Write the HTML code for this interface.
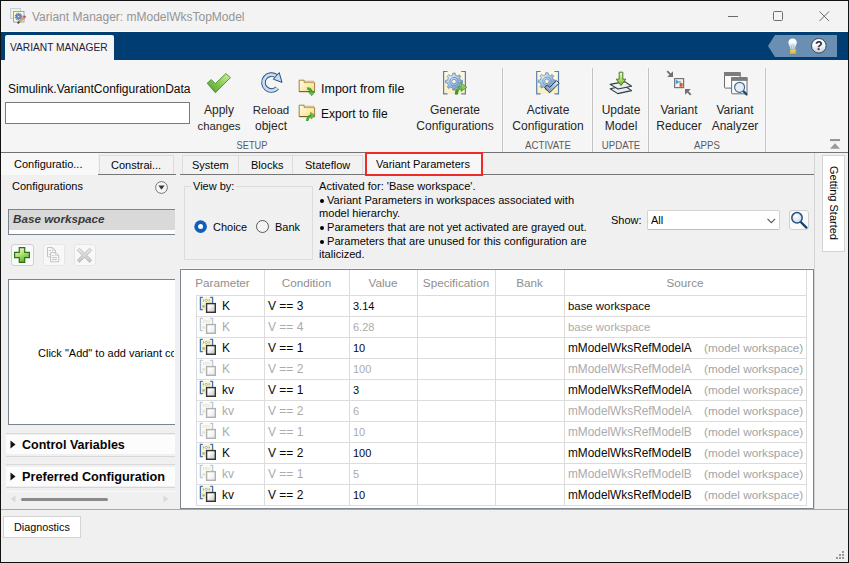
<!DOCTYPE html>
<html><head><meta charset="utf-8">
<style>
*{margin:0;padding:0;box-sizing:border-box}
html,body{width:849px;height:563px;overflow:hidden;background:#f0f0f0}
body{font-family:"Liberation Sans",sans-serif;font-size:12px;line-height:14px;color:#000;position:relative}
.a{position:absolute;white-space:nowrap}
.lb{position:absolute;white-space:nowrap;text-align:center;color:#262626;font-size:12px;line-height:16px}
.sec{position:absolute;white-space:nowrap;text-align:center;color:#5a5a5a;font-size:10.5px;line-height:12px;transform:scaleX(0.92)}
.dv{position:absolute;width:1px;background:#c2c2c2;box-shadow:-1px 0 0 #f9f9f9,1px 0 0 #f9f9f9}
.hd{color:#8f8f8f;font-size:11.7px}
.td{font-size:11.5px;line-height:14px}
.t11{font-size:11px;line-height:13px}
svg{overflow:visible}
</style></head><body>
<svg width="0" height="0" style="position:absolute"><defs>
<linearGradient id="pg" x1="0" y1="0" x2="1" y2="1"><stop offset="0.3" stop-color="#ffffff"/><stop offset="1" stop-color="#bdbdbd"/></linearGradient>
<linearGradient id="py" x1="0" y1="0" x2="0.3" y2="1"><stop offset="0" stop-color="#fbf6dc"/><stop offset="1" stop-color="#fbf0b0"/></linearGradient>
<linearGradient id="chk" x1="0" y1="0" x2="0" y2="1"><stop offset="0" stop-color="#a6dc6a"/><stop offset="1" stop-color="#4c9a2a"/></linearGradient>
<linearGradient id="fold" x1="0" y1="0" x2="0" y2="1"><stop offset="0" stop-color="#fdf3b8"/><stop offset="1" stop-color="#e8cf78"/></linearGradient>
<radialGradient id="gear" cx="0.4" cy="0.35" r="0.7"><stop offset="0" stop-color="#b9d2ee"/><stop offset="1" stop-color="#5b86bb"/></radialGradient>
</defs></svg>

<!-- title bar -->
<div class="a" style="left:0;top:0;width:849px;height:31px;background:#f3f3f3"></div>
<div class="a" style="left:0;top:31px;width:849px;height:1px;background:#fbfbfb"></div>
<svg class="a" style="left:9px;top:7px" width="18" height="18" viewBox="0 0 18 18">
<rect x="1.5" y="1.5" width="10" height="10" fill="#fbf3c8" stroke="#bcd0e6" stroke-width="1"/>
<rect x="4.5" y="4.5" width="10.5" height="10.5" fill="#fdf8dc" stroke="#8aa8cc" stroke-width="1"/>
<circle cx="9.6" cy="9.6" r="3.3" fill="none" stroke="#5a80b8" stroke-width="1.2" stroke-dasharray="1.2 0.9"/>
<circle cx="9.6" cy="9.6" r="2.8" fill="#4f78b2"/>
<circle cx="9.6" cy="9.6" r="1.6" fill="none" stroke="#8fb0d8" stroke-width="0.7"/>
<circle cx="9.6" cy="9.6" r="0.7" fill="#fff"/>
<path d="M9.8 15.4L15.4 10" stroke="#d8a048" stroke-width="2.3"/>
<path d="M14.8 10.6L16.4 9" stroke="#d04a78" stroke-width="2.3"/>
<path d="M8.6 16.4L10.2 14.8" stroke="#3a3a3a" stroke-width="1.6"/>
</svg>
<div class="a" style="left:32px;top:10px;color:#949494;font-size:12px">Variant Manager: mModelWksTopModel</div>
<div class="a" style="left:728px;top:16px;width:10px;height:1px;background:#6a6a6a"></div>
<div class="a" style="left:773px;top:11px;width:10px;height:10px;border:1px solid #6e6e6e;border-radius:1.5px"></div>
<svg class="a" style="left:819px;top:11px" width="11" height="11" viewBox="0 0 11 11"><path d="M0.5 0.5L10 10M10 0.5L0.5 10" stroke="#6a6a6a" stroke-width="1"/></svg>

<!-- blue band -->
<div class="a" style="left:0;top:32px;width:849px;height:28px;background:#003d73"></div>
<div class="a" style="left:5px;top:35px;width:109px;height:25px;background:#f5f5f5;border-radius:2px 2px 0 0"></div>
<div class="a" style="left:10px;top:40px;font-size:10.2px;line-height:14px;color:#202040;padding-top:1px">VARIANT MANAGER</div>
<svg class="a" style="left:768px;top:35px" width="69" height="22" viewBox="0 0 69 22"><path d="M0 11L7 0H69V22H7Z" fill="#6b8fb2"/></svg>
<svg class="a" style="left:788px;top:38px" width="10" height="17" viewBox="0 0 10 17">
<defs><linearGradient id="bg1" x1="0" y1="0" x2="0" y2="1"><stop offset="0.3" stop-color="#ffffff"/><stop offset="1" stop-color="#b8d0ea"/></linearGradient></defs>
<path d="M4.6 0.4C1.9 0.4 0.4 2.4 0.4 4.6C0.4 6.9 2 8.2 2.2 11H7C7.2 8.2 8.8 6.9 8.8 4.6C8.8 2.4 7.3 0.4 4.6 0.4Z" fill="url(#bg1)"/>
<path d="M3.4 10.8V7.4L4.6 6.6L5.8 7.4V10.8" fill="none" stroke="#9aa8b8" stroke-width="0.6"/>
<rect x="2" y="11" width="6.2" height="4.8" fill="#d2ae2c"/>
<path d="M2.6 12.6L7.4 12M2.6 14.4L7.4 13.8" stroke="#f4e27a" stroke-width="0.9"/>
</svg>
<svg class="a" style="left:811px;top:38px" width="16" height="16" viewBox="0 0 16 16">
<defs><linearGradient id="hg" x1="0" y1="0" x2="0" y2="1"><stop offset="0.4" stop-color="#ffffff"/><stop offset="1" stop-color="#c4cad2"/></linearGradient></defs>
<circle cx="7.8" cy="7.8" r="7.3" fill="url(#hg)" stroke="#2c3c54" stroke-width="0.9"/>
<text x="7.9" y="12.4" text-anchor="middle" font-family="Liberation Sans" font-weight="bold" font-size="12.5" fill="#1e2b42">?</text>
</svg>

<!-- toolstrip body -->
<div class="a" style="left:0;top:60px;width:849px;height:92px;background:#f5f5f5"></div>
<div class="a" style="left:0;top:152px;width:849px;height:1px;background:#727272"></div>

<div class="a" style="left:8px;top:82px;color:#0a0a0a">Simulink.VariantConfigurationData</div>
<div class="a" style="left:5px;top:102px;width:185px;height:22px;background:#fff;border:1px solid #7a7a7a"></div>

<!-- Apply changes -->
<svg class="a" style="left:206px;top:72px" width="26" height="22" viewBox="0 0 26 22">
<defs><linearGradient id="chk2" x1="1" y1="0" x2="0" y2="1"><stop offset="0" stop-color="#d6f29a"/><stop offset="0.6" stop-color="#7cc04a"/><stop offset="1" stop-color="#4a9a2c"/></linearGradient></defs>
<path d="M1.2 11.2L5.3 7.6L9.4 11.7L19.8 1.6L24.4 5.6L9.4 20.8Z" fill="url(#chk2)" stroke="#3f8a2a" stroke-width="0.9" stroke-linejoin="round"/>
</svg>
<div class="lb" style="left:189px;top:102px;width:60px">Apply</div>
<div class="lb" style="left:189px;top:118px;width:60px;font-size:11.4px">changes</div>
<!-- Reload -->
<svg class="a" style="left:260px;top:72px" width="23" height="22" viewBox="0 0 23 22">
<path d="M17.3 16A8 8 0 1 1 16.2 4.1" fill="none" stroke="#2a4d7a" stroke-width="4.6"/>
<path d="M17.3 16A8 8 0 1 1 16.2 4.1" fill="none" stroke="#c6ddf2" stroke-width="2.8"/>
<path d="M19.2 0.6L22 10.4L13.4 7.2Z" fill="#c6ddf2" stroke="#2a4d7a" stroke-width="1" stroke-linejoin="round"/>
</svg>
<div class="lb" style="left:241px;top:102px;width:60px;font-size:11.5px">Reload</div>
<div class="lb" style="left:241px;top:118px;width:60px">object</div>
<!-- import/export -->
<svg class="a" style="left:298px;top:79px" width="18" height="18" viewBox="0 0 18 18">
<defs><linearGradient id="fold2" x1="0" y1="0" x2="1" y2="1"><stop offset="0" stop-color="#fffdf2"/><stop offset="0.5" stop-color="#fbefb4"/><stop offset="1" stop-color="#f2da78"/></linearGradient>
<linearGradient id="gar" x1="0" y1="0" x2="1" y2="1"><stop offset="0" stop-color="#3a9a2a"/><stop offset="1" stop-color="#a6e070"/></linearGradient></defs>
<path d="M1.2 1.2H6.2V3.6H16.6V12.6H1.2Z" fill="url(#fold2)" stroke="#a97e3c" stroke-width="1" stroke-linejoin="round"/>
<rect x="6.7" y="1.7" width="9.4" height="1.9" fill="#dcbd82"/>
<path d="M1.2 12.6H16.6" stroke="#7a5a26" stroke-width="1"/>
<path d="M9.2 9.4Q12.6 9.6 13.6 13.2" fill="none" stroke="#47a436" stroke-width="2.6"/>
<path d="M10.6 13L16.8 13L13.7 16.8Z" fill="#6cc04a" stroke="#3a8a2a" stroke-width="0.6"/>
</svg>
<div class="a" style="left:321px;top:82px;color:#0a0a0a;font-size:12.5px">Import from file</div>
<svg class="a" style="left:298px;top:104px" width="18" height="18" viewBox="0 0 18 18">
<path d="M1.2 1.2H6.2V3.6H16.6V12.6H1.2Z" fill="url(#fold2)" stroke="#a97e3c" stroke-width="1" stroke-linejoin="round"/>
<rect x="6.7" y="1.7" width="9.4" height="1.9" fill="#dcbd82"/>
<path d="M1.2 12.6H16.6" stroke="#7a5a26" stroke-width="1"/>
<path d="M9.2 17Q9.6 12.6 13.4 11.6" fill="none" stroke="#47a436" stroke-width="2.6"/>
<path d="M12.6 8.4L16.9 11.4L13.2 15Z" fill="#6cc04a" stroke="#3a8a2a" stroke-width="0.6"/>
</svg>
<div class="a" style="left:321px;top:107px;color:#0a0a0a">Export to file</div>
<div class="sec" style="left:222px;top:139px;width:60px;transform:scaleX(0.88)">SETUP</div>
<div class="dv" style="left:502px;top:68px;height:84px"></div>

<!-- Generate -->
<svg class="a" style="left:442px;top:71px" width="25" height="24" viewBox="0 0 25 24">
<defs><linearGradient id="yb" x1="0" y1="0" x2="0" y2="1"><stop offset="0" stop-color="#fdf9e4"/><stop offset="1" stop-color="#f9efbe"/></linearGradient>
<radialGradient id="gr2" cx="0.3" cy="0.25" r="0.85"><stop offset="0" stop-color="#e4eef8"/><stop offset="0.5" stop-color="#a9c6e6"/><stop offset="1" stop-color="#5f8cc0"/></radialGradient>
<linearGradient id="ga" x1="0" y1="1" x2="1" y2="0"><stop offset="0" stop-color="#2f8a1e"/><stop offset="1" stop-color="#b6ea7a"/></linearGradient></defs>
<rect x="1.2" y="0.4" width="22.4" height="22.6" fill="url(#yb)"/>
<path d="M5.6 0.5H1.6V22.9H5.6M19.2 0.5H23.4V22.9H19.2" fill="none" stroke="#5a80b0" stroke-width="1.2"/>
<path d="M18.57 9.29 L20.51 9.34 L20.51 11.86 L18.57 11.91 L17.57 14.32 L18.91 15.72 L17.12 17.51 L15.72 16.17 L13.31 17.17 L13.26 19.11 L10.74 19.11 L10.69 17.17 L8.28 16.17 L6.88 17.51 L5.09 15.72 L6.43 14.32 L5.43 11.91 L3.49 11.86 L3.49 9.34 L5.43 9.29 L6.43 6.88 L5.09 5.48 L6.88 3.69 L8.28 5.03 L10.69 4.03 L10.74 2.09 L13.26 2.09 L13.31 4.03 L15.72 5.03 L17.12 3.69 L18.91 5.48 L17.57 6.88Z" fill="url(#gr2)" stroke="#6a8cb8" stroke-width="0.8"/>
<circle cx="12" cy="10.6" r="4.2" fill="none" stroke="#6d94c4" stroke-width="1"/>
<circle cx="12" cy="10.6" r="2.3" fill="#fbf4cf" stroke="#5d86ba" stroke-width="0.8"/>
<path d="M13.2 23.2C13.4 18.5 15.5 15.6 19 15.2V11.8L24.8 16.2L19 20.4V17.8C16.8 18.2 15.8 20.4 15.6 23.2Z" fill="url(#ga)" stroke="#2e7a1e" stroke-width="0.6"/>
</svg>
<div class="lb" style="left:415px;top:102px;width:80px">Generate</div>
<div class="lb" style="left:410px;top:118px;width:90px">Configurations</div>

<!-- Activate -->
<svg class="a" style="left:536px;top:71px" width="24" height="24" viewBox="0 0 24 24">
<defs><linearGradient id="ck3" x1="0" y1="1" x2="1" y2="0"><stop offset="0" stop-color="#6a88a8"/><stop offset="1" stop-color="#e6f2fc"/></linearGradient></defs>
<rect x="0.6" y="0.4" width="22" height="22.6" fill="url(#yb)"/>
<path d="M4.6 0.5H0.7V22.9H4.6M18.4 0.5H22.5V22.9H18.4" fill="none" stroke="#5a80b0" stroke-width="1.2"/>
<path d="M17.47 8.99 L19.41 9.04 L19.41 11.56 L17.47 11.61 L16.47 14.02 L17.81 15.42 L16.02 17.21 L14.62 15.87 L12.21 16.87 L12.16 18.81 L9.64 18.81 L9.59 16.87 L7.18 15.87 L5.78 17.21 L3.99 15.42 L5.33 14.02 L4.33 11.61 L2.39 11.56 L2.39 9.04 L4.33 8.99 L5.33 6.58 L3.99 5.18 L5.78 3.39 L7.18 4.73 L9.59 3.73 L9.64 1.79 L12.16 1.79 L12.21 3.73 L14.62 4.73 L16.02 3.39 L17.81 5.18 L16.47 6.58Z" fill="url(#gr2)" stroke="#6a8cb8" stroke-width="0.8"/>
<circle cx="10.9" cy="10.3" r="4.2" fill="none" stroke="#6d94c4" stroke-width="1"/>
<circle cx="10.9" cy="10.3" r="2.3" fill="#fbf4cf" stroke="#5d86ba" stroke-width="0.8"/>
<path d="M8.6 16.6L11.4 14L13.6 16.4L20.6 9.6L23.2 12.2L13.6 21.8Z" fill="url(#ck3)" stroke="#1e2e44" stroke-width="0.9" stroke-linejoin="round"/>
</svg>
<div class="lb" style="left:508px;top:102px;width:80px">Activate</div>
<div class="lb" style="left:508px;top:118px;width:80px">Configuration</div>
<div class="sec" style="left:508px;top:139px;width:80px">ACTIVATE</div>
<div class="dv" style="left:592px;top:68px;height:84px"></div>

<!-- Update -->
<svg class="a" style="left:609px;top:71px" width="24" height="24" viewBox="0 0 24 24">
<defs><linearGradient id="sh" x1="0" y1="0" x2="1" y2="1"><stop offset="0" stop-color="#ffffff"/><stop offset="1" stop-color="#d4dde4"/></linearGradient>
<linearGradient id="ua" x1="0" y1="0" x2="0" y2="1"><stop offset="0" stop-color="#f4fbe8"/><stop offset="0.6" stop-color="#a8d860"/><stop offset="1" stop-color="#6aaa2a"/></linearGradient></defs>
<path d="M1.2 17.8L8.8 22.6L22.6 19.6L15.4 14.8Z" fill="url(#sh)" stroke="#2e3c40" stroke-width="1.1" stroke-linejoin="round"/>
<path d="M1.2 13.4L9 18L22.6 15.2L15.8 10.6Z" fill="url(#sh)" stroke="#2e3c40" stroke-width="1.1" stroke-linejoin="round"/>
<path d="M10.2 1.2H13.8V8.2H16.8L12 14.4L7.2 8.2H10.2Z" fill="url(#ua)" stroke="#4a7a14" stroke-width="1" stroke-linejoin="round"/>
</svg>
<div class="lb" style="left:591px;top:102px;width:60px">Update</div>
<div class="lb" style="left:591px;top:118px;width:60px">Model</div>
<div class="sec" style="left:591px;top:139px;width:60px">UPDATE</div>
<div class="dv" style="left:648px;top:68px;height:84px"></div>

<!-- Reducer -->
<svg class="a" style="left:666px;top:70px" width="26" height="26" viewBox="0 0 26 26">
<path d="M1.2 1.2L5.6 5.6" stroke="#707070" stroke-width="1.8"/>
<path d="M7 1.2V7H1.2Z" fill="#707070"/>
<path d="M20.4 20.4L24.8 24.8" stroke="#707070" stroke-width="1.8"/>
<path d="M19 19H24.8L19 24.8Z" fill="#707070"/>
<rect x="8.6" y="8.6" width="9" height="9" fill="#f2f2f2" stroke="#767676" stroke-width="1.2"/>
<path d="M9.8 9.6V14.2L13.4 11.9Z" fill="#3a98dc"/>
<path d="M13 11.9H15" stroke="#555" stroke-width="0.8"/>
<rect x="13.6" y="13" width="3" height="3.8" rx="0.6" fill="#e0561e"/>
</svg>
<div class="lb" style="left:649px;top:102px;width:60px">Variant</div>
<div class="lb" style="left:649px;top:118px;width:60px">Reducer</div>
<!-- Analyzer -->
<svg class="a" style="left:723px;top:71px" width="26" height="26" viewBox="0 0 26 26">
<rect x="1.5" y="1.5" width="15.6" height="15.6" rx="0.8" fill="#fcfcfc" stroke="#6c6c6c" stroke-width="1"/>
<rect x="1" y="1" width="16.6" height="4" fill="#7c7c7c"/>
<rect x="8.6" y="6.6" width="15.4" height="16.2" rx="0.8" fill="#fcfcfc" stroke="#6c6c6c" stroke-width="1"/>
<rect x="8.1" y="6.1" width="16.4" height="3.8" fill="#7c7c7c"/>
<path d="M20 19.8L23.6 23.4" stroke="#1e4670" stroke-width="2.2" stroke-linecap="round"/>
<circle cx="16.6" cy="16.3" r="5" fill="#e6edf4" stroke="#3f6e9e" stroke-width="1.2"/>
</svg>
<div class="lb" style="left:705px;top:102px;width:60px">Variant</div>
<div class="lb" style="left:705px;top:118px;width:60px">Analyzer</div>
<div class="sec" style="left:677px;top:139px;width:60px">APPS</div>
<div class="dv" style="left:765px;top:68px;height:84px"></div>
<svg class="a" style="left:830px;top:139px" width="10" height="10" viewBox="0 0 10 10">
<rect x="0" y="0" width="10" height="2.1" fill="#959595"/>
<path d="M0 9.8L5 4.2L10 9.8Z" fill="#9a9a9a"/>
</svg>

<!-- LEFT PANEL -->
<div class="a" style="left:1px;top:153px;width:97px;height:22px;background:#f8f8f8"></div>
<div class="a t11" style="left:14px;top:158px;color:#050505">Configuratio...</div>
<div class="a" style="left:99px;top:155px;width:75px;height:19px;background:#f2f2f2;border:1px solid #dcdcdc;border-bottom:none"></div>
<div class="a t11" style="left:111px;top:159px;color:#050505">Constrai...</div>
<div class="a t11" style="left:12px;top:180px;color:#050505">Configurations</div>
<svg class="a" style="left:155px;top:181px" width="13" height="13" viewBox="0 0 13 13">
<circle cx="6.5" cy="6.5" r="5.9" fill="#f6f6f6" stroke="#767676" stroke-width="1"/>
<path d="M3.4 4.6L9.6 4.6L6.5 8.8Z" fill="#3a3a3a"/>
</svg>
<div class="a" style="left:8px;top:209px;width:167px;height:26px;background:#fff;border:1px solid #7a8491;border-right:none"></div>
<div class="a" style="left:9px;top:210px;width:166px;height:20px;background:#d9d9d9"></div>
<div class="a" style="left:13px;top:212px;font-weight:bold;font-style:italic;color:#3a3a3a;font-size:11.7px;line-height:14px">Base workspace</div>
<!-- buttons -->
<div class="a" style="left:11px;top:244px;width:23px;height:22px;background:#fafafa;border:1px solid #cfcfcf;border-radius:3px"></div>
<svg class="a" style="left:14px;top:247px" width="16" height="16" viewBox="0 0 16 16">
<defs><linearGradient id="plg" x1="0" y1="0" x2="0.5" y2="1"><stop offset="0" stop-color="#f2fbdc"/><stop offset="0.5" stop-color="#bde47a"/><stop offset="1" stop-color="#62b034"/></linearGradient></defs>
<path d="M5.3 0.6H10.7V5.3H15.4V10.7H10.7V15.4H5.3V10.7H0.6V5.3H5.3Z" fill="url(#plg)" stroke="#2a7418" stroke-width="1.2"/>
</svg>
<div class="a" style="left:43px;top:244px;width:22px;height:22px;background:#f8f8f8;border:1px solid #e6e6e6;border-radius:3px"></div>
<svg class="a" style="left:46px;top:246px" width="14" height="17" viewBox="0 0 14 17">
<path d="M1.5 1.5H6.4L9.5 4.4V10.9H1.5Z" fill="#f9f9f9" stroke="#c2c2c2" stroke-width="1" stroke-linejoin="round"/>
<path d="M6.2 1.6V4.6H9.4" fill="none" stroke="#c8c8c8" stroke-width="0.8"/>
<path d="M2.8 4.5H5M2.8 8.3H4" stroke="#c6c6c6" stroke-width="1"/>
<path d="M4.6 6.6H9.6L12.8 9.3V15.8H4.6Z" fill="#f9f9f9" stroke="#c2c2c2" stroke-width="1" stroke-linejoin="round"/>
<path d="M9.4 6.7V9.5H12.6" fill="none" stroke="#c8c8c8" stroke-width="0.8"/>
<path d="M6 9.6H7.8M6 11.6H11M6 13.5H11" stroke="#c6c6c6" stroke-width="1"/>
</svg>
<div class="a" style="left:74px;top:244px;width:22px;height:22px;background:#f8f8f8;border:1px solid #e6e6e6;border-radius:3px"></div>
<svg class="a" style="left:76px;top:247px" width="17" height="16" viewBox="0 0 17 16">
<defs><linearGradient id="xg" x1="0" y1="0" x2="0" y2="1"><stop offset="0" stop-color="#e8e8e8"/><stop offset="1" stop-color="#c4c4c4"/></linearGradient></defs>
<path d="M1.2 3.4L3.4 1.2L8.5 6.1L13.6 1.2L15.8 3.4L10.8 8.3L15.8 13.2L13.6 15.4L8.5 10.5L3.4 15.4L1.2 13.2L6.2 8.3Z" fill="url(#xg)" stroke="#b8b8b8" stroke-width="0.8" stroke-linejoin="round"/>
</svg>
<div class="a" style="left:8px;top:279px;width:167px;height:146px;background:#fff;border:1px solid #7a8491;border-right:none"></div>
<div class="a t11" style="left:38px;top:347px;color:#050505;width:136px;overflow:hidden">Click "Add" to add variant co</div>
<div class="a" style="left:6px;top:433px;width:169px;height:24px;background:#f0f0f0;border-top:1px solid #d8d8d8;border-bottom:1px solid #d8d8d8"></div>
<div class="a" style="left:6px;top:435px;width:169px;height:19px;background:#fcfcfc"></div>
<svg class="a" style="left:10px;top:440px" width="6" height="9" viewBox="0 0 6 9"><path d="M0.5 0.5L5.5 4.5L0.5 8.5Z" fill="#111"/></svg>
<div class="a" style="left:22px;top:438px;font-weight:bold;color:#050505;font-size:12.5px;line-height:14px">Control Variables</div>
<div class="a" style="left:6px;top:464px;width:169px;height:24px;background:#f0f0f0;border-top:1px solid #d8d8d8;border-bottom:1px solid #d8d8d8"></div>
<div class="a" style="left:6px;top:467px;width:169px;height:19px;background:#fcfcfc"></div>
<div class="a" style="left:6px;top:491px;width:169px;height:1px;background:#fafafa"></div>
<svg class="a" style="left:10px;top:472px" width="6" height="9" viewBox="0 0 6 9"><path d="M0.5 0.5L5.5 4.5L0.5 8.5Z" fill="#111"/></svg>
<div class="a" style="left:22px;top:470px;font-weight:bold;color:#050505;font-size:12.7px;line-height:14px">Preferred Configuration</div>
<svg class="a" style="left:10px;top:495px" width="6" height="8" viewBox="0 0 6 8"><path d="M5.5 0.5L0.5 4L5.5 7.5Z" fill="#dadada"/></svg>
<div class="a" style="left:21px;top:498px;width:87px;height:3px;background:#8a8a8a;border-radius:1.5px"></div>
<svg class="a" style="left:163px;top:495px" width="6" height="8" viewBox="0 0 6 8"><path d="M0.5 0.5L5.5 4L0.5 7.5Z" fill="#dadada"/></svg>


<!-- RIGHT MAIN -->
<div class="a" style="left:182px;top:155px;width:57px;height:19px;background:#f2f2f2;border:1px solid #dcdcdc;border-bottom:none"></div>
<div class="a t11" style="left:192px;top:159px;color:#050505">System</div>
<div class="a" style="left:238px;top:155px;width:55px;height:19px;background:#f2f2f2;border:1px solid #dcdcdc;border-bottom:none"></div>
<div class="a t11" style="left:251px;top:159px;color:#050505">Blocks</div>
<div class="a" style="left:292px;top:155px;width:71px;height:19px;background:#f2f2f2;border:1px solid #dcdcdc;border-bottom:none"></div>
<div class="a t11" style="left:305px;top:159px;color:#050505">Stateflow</div>
<div class="a" style="left:365px;top:152px;width:118px;height:24px;background:#f7f7f7;border:2px solid #ee2b2b"></div>
<div class="a t11" style="left:376px;top:158px;color:#050505">Variant Parameters</div>
<div class="a" style="left:180px;top:174px;width:185px;height:1px;background:#767676"></div>
<div class="a" style="left:483px;top:174px;width:332px;height:1px;background:#767676"></div>
<div class="a" style="left:98px;top:174px;width:78px;height:1px;background:#767676"></div>

<div class="a" style="left:184px;top:186px;width:129px;height:74px;border:1px solid #dcdcdc"></div>
<div class="a t11" style="left:191px;top:180px;padding:0 2px;background:#f0f0f0;color:#050505">View by:</div>
<svg class="a" style="left:194px;top:220px" width="14" height="14" viewBox="0 0 14 14"><circle cx="6.6" cy="6.6" r="6.3" fill="#0f5fb8"/><circle cx="6.6" cy="6.6" r="2.5" fill="#fff"/></svg>
<div class="a t11" style="left:213px;top:221px;color:#050505">Choice</div>
<svg class="a" style="left:256px;top:220px" width="14" height="14" viewBox="0 0 14 14"><circle cx="6.5" cy="6.5" r="6" fill="#f4f4f4" stroke="#5a5a5a" stroke-width="1"/></svg>
<div class="a t11" style="left:275px;top:221px;color:#050505">Bank</div>

<div class="a t11" style="left:319px;top:180px;color:#050505;font-size:11.1px">Activated for: 'Base workspace'.</div>
<div class="a" style="left:319.5px;top:199px;width:4px;height:4px;border-radius:50%;background:#000"></div>
<div class="a t11" style="left:327px;top:194px;color:#050505;font-size:11.1px">Variant Parameters in workspaces associated with</div>
<div class="a t11" style="left:319px;top:207px;color:#050505;font-size:11.1px">model hierarchy.</div>
<div class="a" style="left:319.5px;top:226px;width:4px;height:4px;border-radius:50%;background:#000"></div>
<div class="a t11" style="left:327px;top:221px;color:#050505;font-size:11.1px">Parameters that are not yet activated are grayed out.</div>
<div class="a" style="left:319.5px;top:240px;width:4px;height:4px;border-radius:50%;background:#000"></div>
<div class="a t11" style="left:327px;top:235px;color:#050505;font-size:11.1px">Parameters that are unused for this configuration are</div>
<div class="a t11" style="left:319px;top:248px;color:#050505;font-size:11.1px">italicized.</div>

<div class="a t11" style="left:611px;top:214px;color:#050505">Show:</div>
<div class="a" style="left:647px;top:210px;width:133px;height:20px;background:#fff;border:1px solid #d4d4d4;border-bottom-color:#c0c0c0;border-radius:2px"></div>
<div class="a t11" style="left:651px;top:214px;color:#050505">All</div>
<svg class="a" style="left:767px;top:218px" width="9" height="6" viewBox="0 0 9 6"><path d="M0.5 0.8L4.3 4.6L8.1 0.8" fill="none" stroke="#555" stroke-width="1.1"/></svg>
<div class="a" style="left:789px;top:210px;width:20px;height:20px;background:#fbfbfb;border:1px solid #d0d0d0;border-radius:3px"></div>
<svg class="a" style="left:789px;top:210px" width="20" height="20" viewBox="0 0 20 20">
<defs><radialGradient id="lg" cx="0.4" cy="0.35" r="0.7"><stop offset="0" stop-color="#ffffff"/><stop offset="1" stop-color="#c8d8e8"/></radialGradient></defs>
<path d="M12 12.2L17.4 17.6" stroke="#1a3f66" stroke-width="2.3" stroke-linecap="round"/>
<circle cx="8" cy="7.8" r="5.2" fill="url(#lg)" stroke="#24507e" stroke-width="1.5"/>
</svg>

<div class="a" style="left:180px;top:268px;width:634px;height:1px;background:#f7f7f7"></div>
<!-- table frame -->
<div class="a" style="left:180px;top:269px;width:634px;height:240px;background:#fff;border:1px solid #7e858f"></div>
<div class="a" style="left:264px;top:270px;width:1px;height:25px;background:#dcdcdc"></div>
<div class="a" style="left:349px;top:270px;width:1px;height:25px;background:#dcdcdc"></div>
<div class="a" style="left:417px;top:270px;width:1px;height:25px;background:#dcdcdc"></div>
<div class="a" style="left:495px;top:270px;width:1px;height:25px;background:#dcdcdc"></div>
<div class="a" style="left:564px;top:270px;width:1px;height:25px;background:#dcdcdc"></div>
<div class="a" style="left:806px;top:270px;width:1px;height:25px;background:#dcdcdc"></div>
<div class="a hd" style="left:181px;top:276px;width:83px;text-align:center">Parameter</div>
<div class="a hd" style="left:264px;top:276px;width:85px;text-align:center">Condition</div>
<div class="a hd" style="left:349px;top:276px;width:68px;text-align:center">Value</div>
<div class="a hd" style="left:417px;top:276px;width:78px;text-align:center">Specification</div>
<div class="a hd" style="left:495px;top:276px;width:69px;text-align:center">Bank</div>
<div class="a hd" style="left:564px;top:276px;width:242px;text-align:center">Source</div>
<div class="a" style="left:196px;top:295px;width:611px;height:1px;background:#dcdcdc"></div>
<div class="a" style="left:196px;top:316px;width:611px;height:1px;background:#dcdcdc"></div>
<div class="a" style="left:196px;top:337px;width:611px;height:1px;background:#dcdcdc"></div>
<div class="a" style="left:196px;top:358px;width:611px;height:1px;background:#dcdcdc"></div>
<div class="a" style="left:196px;top:379px;width:611px;height:1px;background:#dcdcdc"></div>
<div class="a" style="left:196px;top:400px;width:611px;height:1px;background:#dcdcdc"></div>
<div class="a" style="left:196px;top:421px;width:611px;height:1px;background:#dcdcdc"></div>
<div class="a" style="left:196px;top:442px;width:611px;height:1px;background:#dcdcdc"></div>
<div class="a" style="left:196px;top:463px;width:611px;height:1px;background:#dcdcdc"></div>
<div class="a" style="left:196px;top:484px;width:611px;height:1px;background:#dcdcdc"></div>
<div class="a" style="left:196px;top:505px;width:611px;height:1px;background:#dcdcdc"></div>
<div class="a" style="left:196px;top:295px;width:1px;height:210px;background:#dcdcdc"></div>
<div class="a" style="left:264px;top:295px;width:1px;height:210px;background:#dcdcdc"></div>
<div class="a" style="left:349px;top:295px;width:1px;height:210px;background:#dcdcdc"></div>
<div class="a" style="left:417px;top:295px;width:1px;height:210px;background:#dcdcdc"></div>
<div class="a" style="left:495px;top:295px;width:1px;height:210px;background:#dcdcdc"></div>
<div class="a" style="left:564px;top:295px;width:1px;height:210px;background:#dcdcdc"></div>
<div class="a" style="left:806px;top:295px;width:1px;height:210px;background:#dcdcdc"></div>
<svg class="a" style="left:199px;top:296px;opacity:1" width="18" height="18" viewBox="0 0 18 18">
<rect x="1.6" y="1" width="11.6" height="13" fill="url(#py)"/>
<path d="M3.8 1.4H1.4V13.6H3.8M11.2 1.4H13.6V13.6H11.2" fill="none" stroke="#4673ad" stroke-width="1.3"/>
<path d="M4.4 3.2V5.6M10.2 3.2V5.6" stroke="#8fb0d8" stroke-width="1"/>
<path d="M7.3 3L8.6 4.4L7.3 5.8L6 4.4Z" fill="none" stroke="#8fb0d8" stroke-width="1"/>
<circle cx="4.6" cy="10.4" r="1.4" fill="#a9b4b0"/>
<rect x="7.6" y="7.6" width="8.7" height="8.7" fill="url(#pg)" stroke="#333" stroke-width="1.4"/>
</svg>
<div class="a td" style="left:222px;top:299px;color:#0a0a0a;font-size:12px">K</div>
<div class="a td" style="left:268px;top:299px;color:#0a0a0a;font-size:12px">V == 3</div>
<div class="a td" style="left:353px;top:299px;color:#0a0a0a;font-size:11px">3.14</div>
<div class="a td" style="left:568px;top:299px;color:#0a0a0a;font-size:11.4px">base workspace</div>
<svg class="a" style="left:199px;top:317px;opacity:0.38" width="18" height="18" viewBox="0 0 18 18">
<rect x="1.6" y="1" width="11.6" height="13" fill="url(#py)"/>
<path d="M3.8 1.4H1.4V13.6H3.8M11.2 1.4H13.6V13.6H11.2" fill="none" stroke="#4673ad" stroke-width="1.3"/>
<path d="M4.4 3.2V5.6M10.2 3.2V5.6" stroke="#8fb0d8" stroke-width="1"/>
<path d="M7.3 3L8.6 4.4L7.3 5.8L6 4.4Z" fill="none" stroke="#8fb0d8" stroke-width="1"/>
<circle cx="4.6" cy="10.4" r="1.4" fill="#a9b4b0"/>
<rect x="7.6" y="7.6" width="8.7" height="8.7" fill="url(#pg)" stroke="#333" stroke-width="1.4"/>
</svg>
<div class="a td" style="left:222px;top:320px;color:#ababab;font-size:12px">K</div>
<div class="a td" style="left:268px;top:320px;color:#ababab;font-size:12px">V == 4</div>
<div class="a td" style="left:353px;top:320px;color:#ababab;font-size:11px">6.28</div>
<div class="a td" style="left:568px;top:320px;color:#ababab;font-size:11.4px">base workspace</div>
<svg class="a" style="left:199px;top:338px;opacity:1" width="18" height="18" viewBox="0 0 18 18">
<rect x="1.6" y="1" width="11.6" height="13" fill="url(#py)"/>
<path d="M3.8 1.4H1.4V13.6H3.8M11.2 1.4H13.6V13.6H11.2" fill="none" stroke="#4673ad" stroke-width="1.3"/>
<path d="M4.4 3.2V5.6M10.2 3.2V5.6" stroke="#8fb0d8" stroke-width="1"/>
<path d="M7.3 3L8.6 4.4L7.3 5.8L6 4.4Z" fill="none" stroke="#8fb0d8" stroke-width="1"/>
<circle cx="4.6" cy="10.4" r="1.4" fill="#a9b4b0"/>
<rect x="7.6" y="7.6" width="8.7" height="8.7" fill="url(#pg)" stroke="#333" stroke-width="1.4"/>
</svg>
<div class="a td" style="left:222px;top:341px;color:#0a0a0a;font-size:12px">K</div>
<div class="a td" style="left:268px;top:341px;color:#0a0a0a;font-size:12px">V == 1</div>
<div class="a td" style="left:353px;top:341px;color:#0a0a0a;font-size:11px">10</div>
<div class="a td" style="left:568px;top:341px;color:#0a0a0a;font-size:11.85px">mModelWksRefModelA</div>
<div class="a td" style="left:704px;top:341px;color:#a3a3a3;font-size:11.75px">(model workspace)</div>
<svg class="a" style="left:199px;top:359px;opacity:0.38" width="18" height="18" viewBox="0 0 18 18">
<rect x="1.6" y="1" width="11.6" height="13" fill="url(#py)"/>
<path d="M3.8 1.4H1.4V13.6H3.8M11.2 1.4H13.6V13.6H11.2" fill="none" stroke="#4673ad" stroke-width="1.3"/>
<path d="M4.4 3.2V5.6M10.2 3.2V5.6" stroke="#8fb0d8" stroke-width="1"/>
<path d="M7.3 3L8.6 4.4L7.3 5.8L6 4.4Z" fill="none" stroke="#8fb0d8" stroke-width="1"/>
<circle cx="4.6" cy="10.4" r="1.4" fill="#a9b4b0"/>
<rect x="7.6" y="7.6" width="8.7" height="8.7" fill="url(#pg)" stroke="#333" stroke-width="1.4"/>
</svg>
<div class="a td" style="left:222px;top:362px;color:#ababab;font-size:12px">K</div>
<div class="a td" style="left:268px;top:362px;color:#ababab;font-size:12px">V == 2</div>
<div class="a td" style="left:353px;top:362px;color:#ababab;font-size:11px">100</div>
<div class="a td" style="left:568px;top:362px;color:#ababab;font-size:11.85px">mModelWksRefModelA</div>
<div class="a td" style="left:704px;top:362px;color:#a3a3a3;font-size:11.75px">(model workspace)</div>
<svg class="a" style="left:199px;top:380px;opacity:1" width="18" height="18" viewBox="0 0 18 18">
<rect x="1.6" y="1" width="11.6" height="13" fill="url(#py)"/>
<path d="M3.8 1.4H1.4V13.6H3.8M11.2 1.4H13.6V13.6H11.2" fill="none" stroke="#4673ad" stroke-width="1.3"/>
<path d="M4.4 3.2V5.6M10.2 3.2V5.6" stroke="#8fb0d8" stroke-width="1"/>
<path d="M7.3 3L8.6 4.4L7.3 5.8L6 4.4Z" fill="none" stroke="#8fb0d8" stroke-width="1"/>
<circle cx="4.6" cy="10.4" r="1.4" fill="#a9b4b0"/>
<rect x="7.6" y="7.6" width="8.7" height="8.7" fill="url(#pg)" stroke="#333" stroke-width="1.4"/>
</svg>
<div class="a td" style="left:222px;top:383px;color:#0a0a0a;font-size:12px">kv</div>
<div class="a td" style="left:268px;top:383px;color:#0a0a0a;font-size:12px">V == 1</div>
<div class="a td" style="left:353px;top:383px;color:#0a0a0a;font-size:11px">3</div>
<div class="a td" style="left:568px;top:383px;color:#0a0a0a;font-size:11.85px">mModelWksRefModelA</div>
<div class="a td" style="left:704px;top:383px;color:#a3a3a3;font-size:11.75px">(model workspace)</div>
<svg class="a" style="left:199px;top:401px;opacity:0.38" width="18" height="18" viewBox="0 0 18 18">
<rect x="1.6" y="1" width="11.6" height="13" fill="url(#py)"/>
<path d="M3.8 1.4H1.4V13.6H3.8M11.2 1.4H13.6V13.6H11.2" fill="none" stroke="#4673ad" stroke-width="1.3"/>
<path d="M4.4 3.2V5.6M10.2 3.2V5.6" stroke="#8fb0d8" stroke-width="1"/>
<path d="M7.3 3L8.6 4.4L7.3 5.8L6 4.4Z" fill="none" stroke="#8fb0d8" stroke-width="1"/>
<circle cx="4.6" cy="10.4" r="1.4" fill="#a9b4b0"/>
<rect x="7.6" y="7.6" width="8.7" height="8.7" fill="url(#pg)" stroke="#333" stroke-width="1.4"/>
</svg>
<div class="a td" style="left:222px;top:404px;color:#ababab;font-size:12px">kv</div>
<div class="a td" style="left:268px;top:404px;color:#ababab;font-size:12px">V == 2</div>
<div class="a td" style="left:353px;top:404px;color:#ababab;font-size:11px">6</div>
<div class="a td" style="left:568px;top:404px;color:#ababab;font-size:11.85px">mModelWksRefModelA</div>
<div class="a td" style="left:704px;top:404px;color:#a3a3a3;font-size:11.75px">(model workspace)</div>
<svg class="a" style="left:199px;top:422px;opacity:0.38" width="18" height="18" viewBox="0 0 18 18">
<rect x="1.6" y="1" width="11.6" height="13" fill="url(#py)"/>
<path d="M3.8 1.4H1.4V13.6H3.8M11.2 1.4H13.6V13.6H11.2" fill="none" stroke="#4673ad" stroke-width="1.3"/>
<path d="M4.4 3.2V5.6M10.2 3.2V5.6" stroke="#8fb0d8" stroke-width="1"/>
<path d="M7.3 3L8.6 4.4L7.3 5.8L6 4.4Z" fill="none" stroke="#8fb0d8" stroke-width="1"/>
<circle cx="4.6" cy="10.4" r="1.4" fill="#a9b4b0"/>
<rect x="7.6" y="7.6" width="8.7" height="8.7" fill="url(#pg)" stroke="#333" stroke-width="1.4"/>
</svg>
<div class="a td" style="left:222px;top:425px;color:#ababab;font-size:12px">K</div>
<div class="a td" style="left:268px;top:425px;color:#ababab;font-size:12px">V == 1</div>
<div class="a td" style="left:353px;top:425px;color:#ababab;font-size:11px">10</div>
<div class="a td" style="left:568px;top:425px;color:#ababab;font-size:11.85px">mModelWksRefModelB</div>
<div class="a td" style="left:704px;top:425px;color:#a3a3a3;font-size:11.75px">(model workspace)</div>
<svg class="a" style="left:199px;top:443px;opacity:1" width="18" height="18" viewBox="0 0 18 18">
<rect x="1.6" y="1" width="11.6" height="13" fill="url(#py)"/>
<path d="M3.8 1.4H1.4V13.6H3.8M11.2 1.4H13.6V13.6H11.2" fill="none" stroke="#4673ad" stroke-width="1.3"/>
<path d="M4.4 3.2V5.6M10.2 3.2V5.6" stroke="#8fb0d8" stroke-width="1"/>
<path d="M7.3 3L8.6 4.4L7.3 5.8L6 4.4Z" fill="none" stroke="#8fb0d8" stroke-width="1"/>
<circle cx="4.6" cy="10.4" r="1.4" fill="#a9b4b0"/>
<rect x="7.6" y="7.6" width="8.7" height="8.7" fill="url(#pg)" stroke="#333" stroke-width="1.4"/>
</svg>
<div class="a td" style="left:222px;top:446px;color:#0a0a0a;font-size:12px">K</div>
<div class="a td" style="left:268px;top:446px;color:#0a0a0a;font-size:12px">V == 2</div>
<div class="a td" style="left:353px;top:446px;color:#0a0a0a;font-size:11px">100</div>
<div class="a td" style="left:568px;top:446px;color:#0a0a0a;font-size:11.85px">mModelWksRefModelB</div>
<div class="a td" style="left:704px;top:446px;color:#a3a3a3;font-size:11.75px">(model workspace)</div>
<svg class="a" style="left:199px;top:464px;opacity:0.38" width="18" height="18" viewBox="0 0 18 18">
<rect x="1.6" y="1" width="11.6" height="13" fill="url(#py)"/>
<path d="M3.8 1.4H1.4V13.6H3.8M11.2 1.4H13.6V13.6H11.2" fill="none" stroke="#4673ad" stroke-width="1.3"/>
<path d="M4.4 3.2V5.6M10.2 3.2V5.6" stroke="#8fb0d8" stroke-width="1"/>
<path d="M7.3 3L8.6 4.4L7.3 5.8L6 4.4Z" fill="none" stroke="#8fb0d8" stroke-width="1"/>
<circle cx="4.6" cy="10.4" r="1.4" fill="#a9b4b0"/>
<rect x="7.6" y="7.6" width="8.7" height="8.7" fill="url(#pg)" stroke="#333" stroke-width="1.4"/>
</svg>
<div class="a td" style="left:222px;top:467px;color:#ababab;font-size:12px">kv</div>
<div class="a td" style="left:268px;top:467px;color:#ababab;font-size:12px">V == 1</div>
<div class="a td" style="left:353px;top:467px;color:#ababab;font-size:11px">5</div>
<div class="a td" style="left:568px;top:467px;color:#ababab;font-size:11.85px">mModelWksRefModelB</div>
<div class="a td" style="left:704px;top:467px;color:#a3a3a3;font-size:11.75px">(model workspace)</div>
<svg class="a" style="left:199px;top:485px;opacity:1" width="18" height="18" viewBox="0 0 18 18">
<rect x="1.6" y="1" width="11.6" height="13" fill="url(#py)"/>
<path d="M3.8 1.4H1.4V13.6H3.8M11.2 1.4H13.6V13.6H11.2" fill="none" stroke="#4673ad" stroke-width="1.3"/>
<path d="M4.4 3.2V5.6M10.2 3.2V5.6" stroke="#8fb0d8" stroke-width="1"/>
<path d="M7.3 3L8.6 4.4L7.3 5.8L6 4.4Z" fill="none" stroke="#8fb0d8" stroke-width="1"/>
<circle cx="4.6" cy="10.4" r="1.4" fill="#a9b4b0"/>
<rect x="7.6" y="7.6" width="8.7" height="8.7" fill="url(#pg)" stroke="#333" stroke-width="1.4"/>
</svg>
<div class="a td" style="left:222px;top:488px;color:#0a0a0a;font-size:12px">kv</div>
<div class="a td" style="left:268px;top:488px;color:#0a0a0a;font-size:12px">V == 2</div>
<div class="a td" style="left:353px;top:488px;color:#0a0a0a;font-size:11px">10</div>
<div class="a td" style="left:568px;top:488px;color:#0a0a0a;font-size:11.85px">mModelWksRefModelB</div>
<div class="a td" style="left:704px;top:488px;color:#a3a3a3;font-size:11.75px">(model workspace)</div>

<!-- right side panel -->
<div class="a" style="left:814px;top:153px;width:1px;height:356px;background:#d4d4d4"></div>
<div class="a" style="left:822px;top:155px;width:23px;height:97px;background:#fff;border:1px solid #d4d4d4"></div>
<div class="a t11" style="left:840px;top:166px;transform-origin:0 0;transform:rotate(90deg);color:#050505">Getting Started</div>

<!-- bottom -->
<div class="a" style="left:0;top:509px;width:849px;height:1px;background:#a8a8a8"></div>
<div class="a" style="left:3px;top:516px;width:78px;height:22px;background:#fff;border:1px solid #d4d4d4"></div>
<div class="a t11" style="left:14px;top:521px;color:#050505;font-size:10.8px">Diagnostics</div>
<svg class="a" style="left:836px;top:551px" width="8" height="8" viewBox="0 0 8 8" fill="#9a9a9a"><rect x="6" y="0" width="2" height="2"/><rect x="3" y="3" width="2" height="2"/><rect x="6" y="3" width="2" height="2"/><rect x="0" y="6" width="2" height="2"/><rect x="3" y="6" width="2" height="2"/><rect x="6" y="6" width="2" height="2"/></svg>

<!-- window border -->
<div class="a" style="left:0;top:0;width:849px;height:1px;background:#111"></div>
<div class="a" style="left:0;top:0;width:1px;height:563px;background:#111"></div>
<div class="a" style="left:0;top:562px;width:849px;height:1px;background:#111"></div>
<div class="a" style="left:848px;top:0;width:1px;height:563px;background:#111"></div>
</body></html>
